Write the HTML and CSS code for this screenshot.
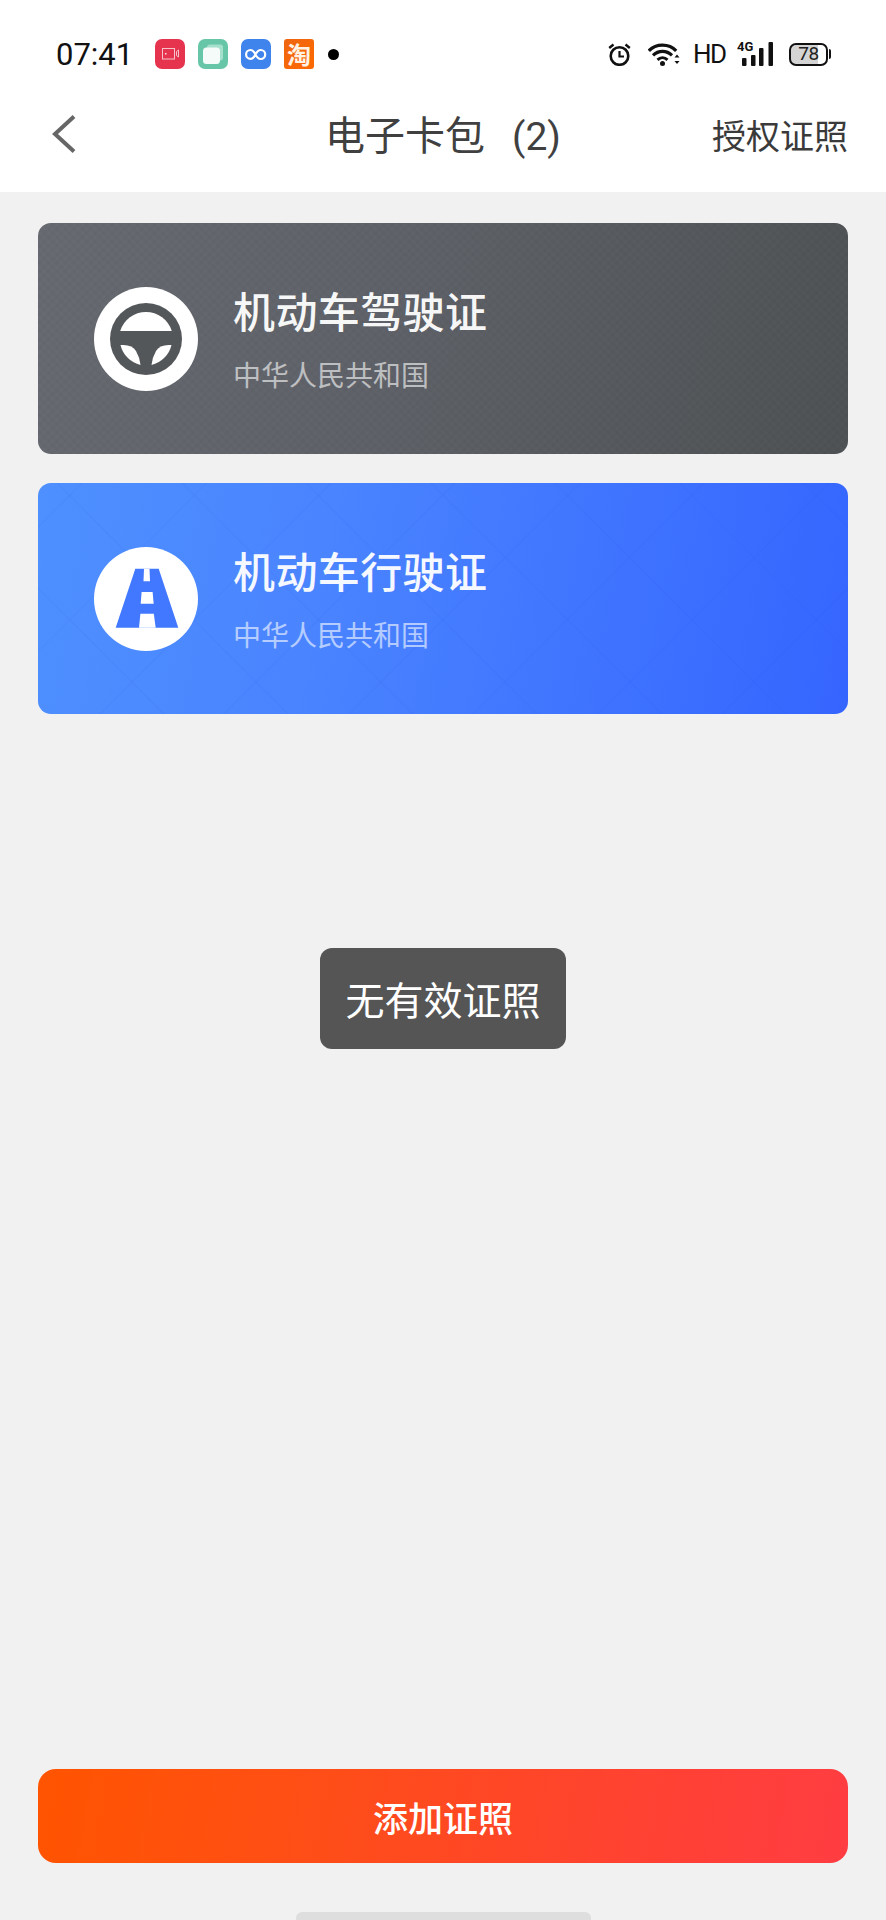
FILE: index.html
```html
<!DOCTYPE html>
<html lang="zh-CN">
<head>
<meta charset="utf-8">
<title>电子卡包</title>
<link rel="stylesheet" href="styles.css">
</head>
<body>
<div class="page">
  <header class="header">
    <div class="status">
      <span class="time">07:41</span>
      <div class="apps">
        <svg class="app" viewBox="0 0 30 30"><rect width="30" height="30" rx="7" fill="#e6344e"/><rect x="7.500" y="9.500" width="12" height="10.500" fill="none" stroke="#f6c3cb" stroke-width="1"/><rect x="10" y="14" width="1.500" height="1.500" fill="#fbe3e7"/><path d="M21.500 12.500l2-1.500v7l-2-1.500z" fill="none" stroke="#f6c3cb" stroke-width="1"/></svg>
        <svg class="app" viewBox="0 0 30 30"><rect width="30" height="30" rx="7" fill="#68c6a8"/><rect x="9" y="5.500" width="16" height="16" rx="3" fill="#a4e0cc"/><rect x="5" y="8.500" width="17" height="16.500" rx="3.500" fill="#f4fbf8"/></svg>
        <svg class="app" viewBox="0 0 30 30"><rect width="30" height="30" rx="7" fill="#3f83ec"/><path d="M14.500 15.500c-1.500-3-3-4.500-5-4.500a4.400 4.400 0 0 0 0 8.800c2 0 3.500-1.300 5-4.300s3-4.500 5.200-4.500a4.500 4.500 0 0 1 0 9c-2.200 0-3.700-1.500-5.200-4.500z" fill="none" stroke="#fff" stroke-width="2.200"/></svg>
        <span class="app app-tao">淘</span>
        <span class="dot"></span>
      </div>
      <div class="sys">
        <svg class="alarm" viewBox="0 0 23 23"><circle cx="11.500" cy="13" r="8.800" fill="none" stroke="#111" stroke-width="2.600"/><path d="M11.500 8v5.500h4.500" fill="none" stroke="#111" stroke-width="2.200"/><path d="M1.200 5l4.300-3.500M21.800 5l-4.300-3.500" stroke="#111" stroke-width="2.400"/></svg>
        <svg class="wifi" viewBox="0 0 32 24"><path d="M.8 8.800C8 1.300 21 1.300 28.200 8.800" fill="none" stroke="#111" stroke-width="3.200"/><path d="M5 13.300C10.500 8 18.500 8 24 13.300" fill="none" stroke="#111" stroke-width="3.200"/><path d="M9.500 17.800c3-2.800 7-2.800 10 0" fill="none" stroke="#111" stroke-width="3"/><circle cx="14.500" cy="21.500" r="2.500" fill="#111"/><path d="M26.500 15.500l2.500-3 2.500 3zM26.500 19l2.500 3 2.500-3z" fill="#111"/></svg>
        <span class="hd">HD</span>
        <svg class="signal" viewBox="0 -6 36 30"><text class="four-g" x="0" y="9">4G</text><rect x="5" y="16" width="4.500" height="8" rx="1" fill="#111"/><rect x="14" y="13" width="4.500" height="11" rx="1" fill="#111"/><rect x="22" y="6" width="4.500" height="18" rx="1" fill="#111"/><rect x="31.500" y="0" width="4.500" height="24" rx="1" fill="#111"/></svg>
        <span class="battery">78</span>
      </div>
    </div>
    <nav class="nav">
      <div class="nav-left">
        <svg class="back" viewBox="0 0 24 40"><path d="M22 2.500L3 20l19 17.500" fill="none" stroke="#666" stroke-width="4"/></svg>
      </div>
      <h1 class="nav-title">电子卡包<span class="nav-count">(2)</span></h1>
      <a class="nav-action">授权证照</a>
    </nav>
  </header>

  <main class="content">
    <section class="card card-dark">
      <svg class="badge" viewBox="0 0 104 104">
        <circle cx="52" cy="52" r="52" fill="#fff"/>
        <circle cx="52" cy="52" r="36" fill="#54575a"/>
        <path d="M26.200 44A27 27 0 0 1 77.800 44Z" fill="#fff"/>
        <path d="M26.500 58Q38 57 42 64Q46 71 46.500 78A27 27 0 0 1 26.500 58Z" fill="#fff"/>
        <path d="M77.500 58Q66 57 62 64Q58 71 57.500 78A27 27 0 0 0 77.500 58Z" fill="#fff"/>
      </svg>
      <div class="card-text">
        <h2 class="card-title">机动车驾驶证</h2>
        <p class="card-sub">中华人民共和国</p>
      </div>
    </section>
    <section class="card card-blue">
      <svg class="badge" viewBox="0 0 104 104">
        <circle cx="52" cy="52" r="52" fill="#fff"/>
        <path d="M41.300 21.700H64.700L84.300 80.700H21.700Z" fill="#4178ff"/>
        <path d="M50 21.700H55.500L56 34.300H49.500Z" fill="#fff"/>
        <path d="M47.600 45H58.600L59.700 56.700H46.700Z" fill="#fff"/>
        <path d="M46.400 66.700H59.800L61.700 80.700H45Z" fill="#fff"/>
      </svg>
      <div class="card-text">
        <h2 class="card-title">机动车行驶证</h2>
        <p class="card-sub">中华人民共和国</p>
      </div>
    </section>
  </main>

  <div class="toast">无有效证照</div>

  <footer class="footer">
    <button class="add-btn">添加证照</button>
    <div class="home"></div>
  </footer>
</div>
</body>
</html>
```

FILE: styles.css
```css
* { box-sizing: border-box; }
html, body { margin: 0; padding: 0; }
body {
  background: #f1f1f2;
  font-family: "Noto Sans CJK SC", "Noto Sans", Roboto, sans-serif;
}
.page {
  position: relative;
  width: 886px;
  height: 1920px;
  display: flex;
  flex-direction: column;
  overflow: hidden;
}
.header {
  background: #fff;
  height: 192px;
  flex: none;
}
.status {
  height: 88px;
  padding: 20px 56px 0 56px;
  display: flex;
  align-items: center;
}
.time {
  font: 400 31px/1 Roboto, sans-serif;
  color: #111;
  width: 99px;
  flex: none;
}
.apps {
  display: flex;
  align-items: center;
  gap: 13px;
}
.app {
  width: 30px;
  height: 30px;
  display: block;
  flex: none;
}
.app-tao {
  background: linear-gradient(135deg, #ee6510, #ff6a00);
  border-radius: 3px;
  color: #fff3e6;
  font: 700 24px/30px "Noto Sans CJK SC", sans-serif;
  text-align: center;
}
.dot {
  width: 11px;
  height: 11px;
  border-radius: 50%;
  background: #000;
  margin-left: 1px;
}
.sys {
  margin-left: auto;
  display: flex;
  align-items: center;
}
.alarm { width: 23px; height: 23px; display: block; }
.wifi { width: 32px; height: 24px; display: block; margin-left: 17px; }
.hd {
  font: 400 26px/1 "Roboto", sans-serif;
  color: #111;
  margin-left: 13px;
  width: 29px;
  letter-spacing: -1.500px;
  white-space: nowrap;
}
.signal { width: 36px; height: 30px; display: block; margin: -6px 0 0 15px; }
.four-g { font: 700 13px Roboto, sans-serif; fill: #111; }
.battery {
  position: relative;
  width: 39px;
  height: 23px;
  margin-left: 16px;
  margin-right: 2px;
  border: 2.500px solid #111;
  border-radius: 7px;
  background: linear-gradient(90deg, #d4d4d4 78%, #fff 78%);
  font: 400 19px/18px Roboto, sans-serif;
  letter-spacing: -0.500px;
  color: #222;
  text-align: center;
}
.battery::after {
  content: "";
  position: absolute;
  right: -5px;
  top: 4px;
  width: 2.500px;
  height: 10px;
  background: #111;
  border-radius: 0 2px 2px 0;
}
.nav {
  height: 92px;
  padding: 0 38px;
  display: grid;
  grid-template-columns: 1fr auto 1fr;
  align-items: center;
}
.nav-left { padding-left: 14px; display: flex; align-items: center; }
.back { width: 24px; height: 40px; display: block; }
.nav-title {
  margin: -3px 0 0;
  font-size: 40px;
  font-weight: 400;
  color: #404040;
  line-height: 1.2;
  white-space: nowrap;
}
.nav-count {
  font: 400 39px/1 Roboto, sans-serif;
  margin-left: 27px;
}
.nav-action {
  justify-self: end;
  margin-top: 2px;
  font-size: 34px;
  line-height: 1.2;
  color: #3a3a3a;
}
.content {
  flex: 1;
  padding: 31px 38px 0;
  display: flex;
  flex-direction: column;
  gap: 29px;
}
.card {
  height: 231px;
  border-radius: 13px;
  padding-left: 56px;
  display: flex;
  align-items: center;
  flex: none;
}
.card-dark {
  background:
    repeating-linear-gradient(45deg, rgba(255,255,255,.008) 0 3px, rgba(0,0,0,.008) 3px 6px),
    repeating-linear-gradient(-45deg, rgba(255,255,255,.008) 0 3px, rgba(0,0,0,.008) 3px 6px),
    linear-gradient(105deg, #666a70 0%, #5d6066 45%, #4d5153 100%);
}
.card-blue {
  background:
    repeating-linear-gradient(45deg, rgba(20,60,200,.04) 0 2px, transparent 2px 88px),
    repeating-linear-gradient(-45deg, rgba(20,60,200,.04) 0 2px, transparent 2px 88px),
    linear-gradient(100deg, #4e90ff 0%, #4a84ff 35%, #3565ff 100%);
}
.badge {
  width: 104px;
  height: 104px;
  display: block;
  flex: none;
}
.card-text {
  margin-left: 35px;
}
.card-title {
  margin: -4px 0 0;
  font-size: 42px;
  letter-spacing: .4px;
  font-weight: 500;
  line-height: 60px;
  color: #fff;
  opacity: .95;
}
.card-sub {
  margin: 14px 0 0;
  font-size: 28px;
  line-height: 40px;
  color: rgba(255,255,255,.6);
}
.toast {
  position: absolute;
  left: 320px;
  top: 948px;
  width: 246px;
  height: 101px;
  border-radius: 12px;
  background: #555;
  color: #fff;
  font-size: 39px;
  line-height: 101px;
  text-align: center;
}
.footer {
  flex: none;
  padding: 0 38px;
  display: flex;
  flex-direction: column;
  align-items: center;
}
.add-btn {
  width: 100%;
  height: 94px;
  border: 0;
  border-radius: 18px;
  background: linear-gradient(100deg, #ff5400 0%, #ff4f14 30%, #ff4036 80%, #ff3d42 100%);
  color: #fff;
  font: 500 35px/1 "Noto Sans CJK SC", sans-serif;
  padding: 0;
}
.home {
  width: 295px;
  height: 8px;
  margin-top: 49px;
  background: #dedede;
  border-radius: 6px 6px 0 0;
}
```
